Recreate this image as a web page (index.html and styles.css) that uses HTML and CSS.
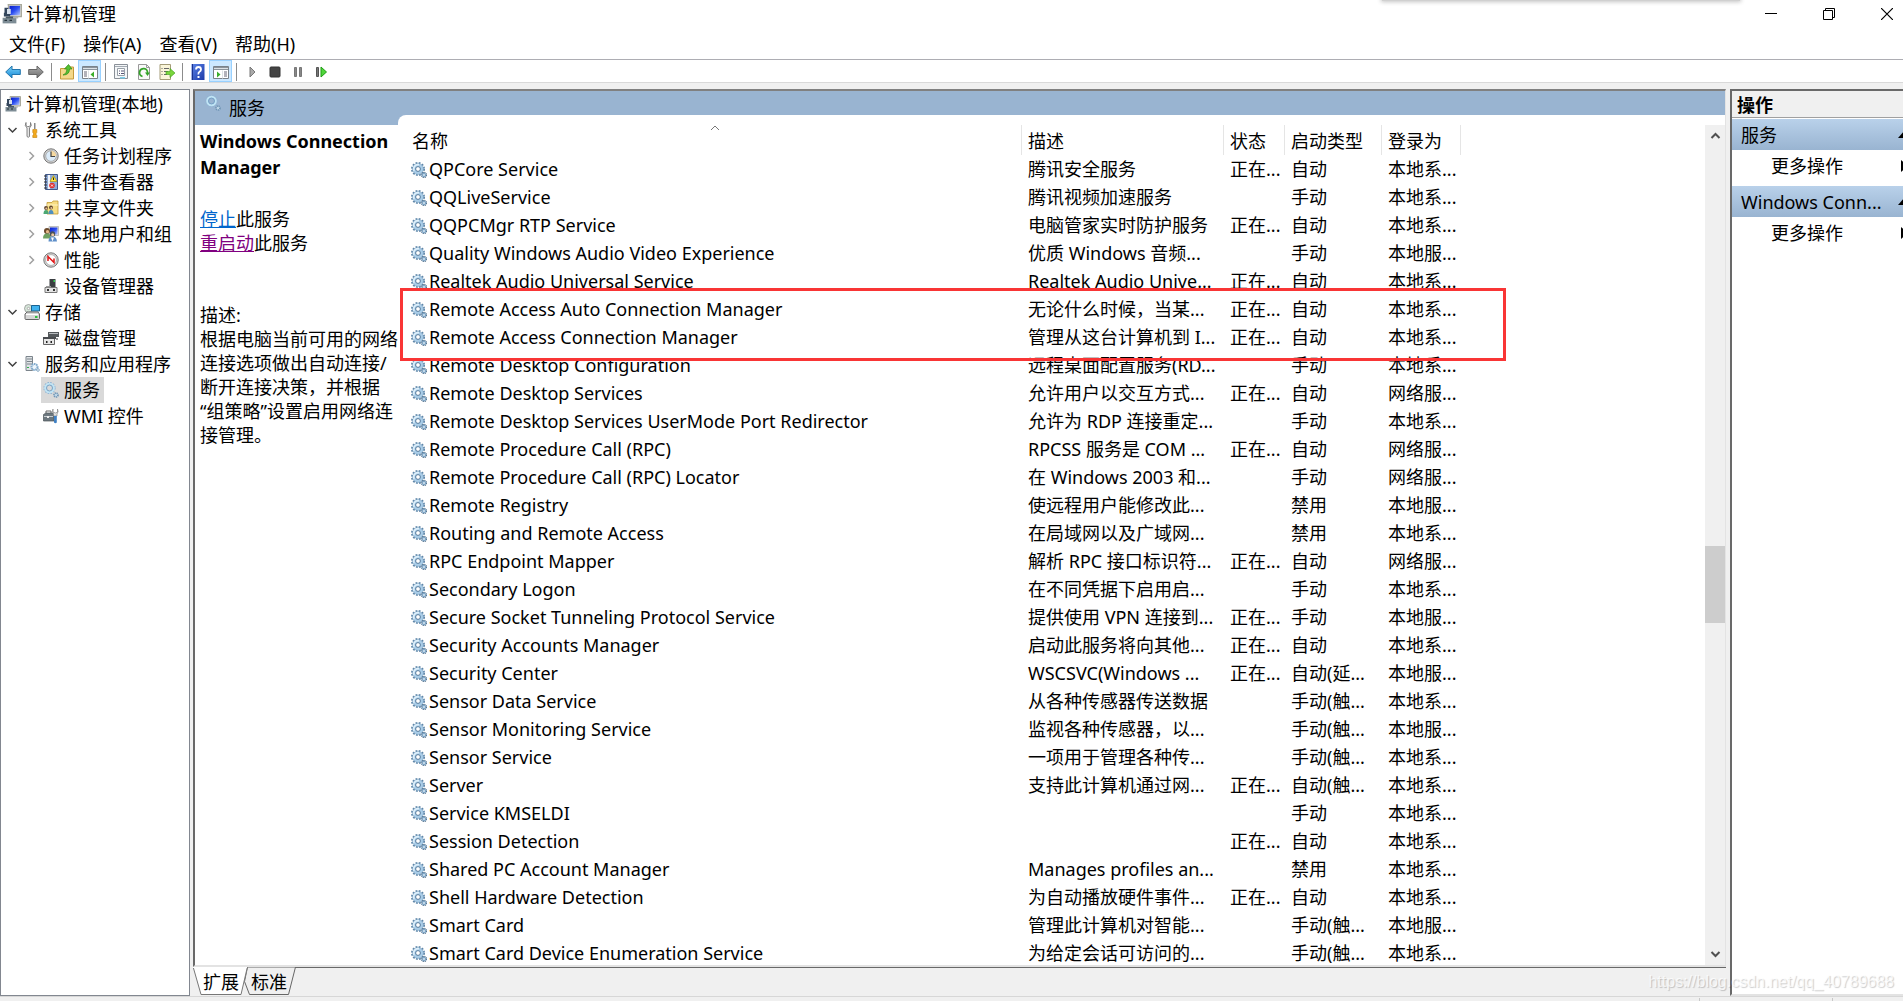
FILE: index.html
```html
<!DOCTYPE html>
<html lang="zh-CN">
<head>
<meta charset="utf-8">
<title>计算机管理</title>
<link rel="stylesheet" href="styles.css">
</head>
<body>
<svg class="sprite" aria-hidden="true">
  <defs>
    <linearGradient id="screen" x1="0" y1="0" x2="1" y2="1"><stop offset="0" stop-color="#0a1ec8"/><stop offset=".5" stop-color="#2b4df0"/><stop offset="1" stop-color="#b9ccff"/></linearGradient>
    <linearGradient id="blueArrow" x1="0" y1="0" x2="0" y2="1"><stop offset="0" stop-color="#7fd4f8"/><stop offset="1" stop-color="#1287d8"/></linearGradient>
    <linearGradient id="grayArrow" x1="0" y1="0" x2="0" y2="1"><stop offset="0" stop-color="#b0b0b0"/><stop offset="1" stop-color="#6c6c6c"/></linearGradient>
    <linearGradient id="help" x1="0" y1="0" x2="1" y2="1"><stop offset="0" stop-color="#5a82e8"/><stop offset="1" stop-color="#1c3aa8"/></linearGradient>
  </defs>
  <symbol id="computer" viewBox="0 0 16 16">
    <path d="M5 .5h10.500v9.500H6z" fill="#d8d8cc" stroke="#a9a99c"/><path d="M6 1.500h8.500v7.500H6z" fill="url(#screen)"/>
    <path d="M2 3h3v4h1.500v3H1.500V7H2z" fill="#34465c"/><path d="M4 4h3v4H4z" fill="#d9e2ee"/>
    <path d="M.5 11h11v4.500H.5z" fill="#7d8c95"/><path d="M2 12.500h2v1H2zM6 12.500h2v1H6z" fill="#26333b"/><path d="M3 10h6v1.500H3z" fill="#4b5a64"/><path d="M9 10.500h4v1H9z" fill="#aaa"/>
  </symbol>
  <symbol id="gear" viewBox="0 0 16 16">
    <circle cx="7" cy="7" r="6" fill="none" stroke="#5f86a8" stroke-width="2" stroke-dasharray="1.800 1.340"/>
    <circle cx="7" cy="7" r="5.400" fill="#a9cde8" stroke="#7ea3c2" stroke-width=".6"/>
    <path d="M3 9a4.500 4.500 0 0 1 5-6.300" fill="none" stroke="#dff0fb" stroke-width="1.600"/>
    <circle cx="7" cy="7" r="2.400" fill="#fff" stroke="#54799b" stroke-width="1"/>
    <circle cx="13" cy="13" r="2.500" fill="none" stroke="#56738e" stroke-width="1.300" stroke-dasharray="1.200 .76"/>
    <circle cx="13" cy="13" r="1.600" fill="#dcebf6" stroke="#7fa6c6" stroke-width="1.300"/>
  </symbol>
  <symbol id="gear-pale" viewBox="0 0 16 16">
    <circle cx="6.500" cy="6" r="5.500" fill="none" stroke="#8eb4d4" stroke-width="1.200" stroke-dasharray="1.700 1.180"/>
    <circle cx="6.500" cy="6" r="4.200" fill="none" stroke="#c0e4f5" stroke-width="2.200"/>
    <circle cx="6.500" cy="6" r="3" fill="none" stroke="#6f9cc2" stroke-width=".9"/>
    <circle cx="13" cy="13" r="2" fill="#c5dcec" stroke="#6f94b4" stroke-width="1.700" stroke-dasharray="1.200 .6"/>
  </symbol>
  <symbol id="tools" viewBox="0 0 16 16">
    <path d="M2 .5 1.300 3.500 3 6v8.500q1.200 1.500 2.500 0V6L7.300 3.500 6.500.5v3L5 4.500H3.500L2 3.500z" fill="#e6e6e6" stroke="#787878" stroke-width=".9"/>
    <path d="M10 1h1.500v6H10z" fill="#888"/><path d="M8.800 7.500h4v3l-.7 1v1l.7 1v2h-4v-2l.7-1v-1l-.7-1z" fill="#f2a91e" stroke="#bf7d0a" stroke-width=".6"/>
  </symbol>
  <symbol id="clock" viewBox="0 0 16 16">
    <circle cx="8" cy="8" r="7.200" fill="#d3d3d3" stroke="#777"/><circle cx="8" cy="8" r="5.300" fill="#dcecfa" stroke="#999" stroke-width=".7"/>
    <path d="M8 8V2.700A5.300 5.300 0 0 1 13.300 8z" fill="#f6d9a0"/><path d="M8 3.500V8.500H12" fill="none" stroke="#444" stroke-width="1.200"/>
  </symbol>
  <symbol id="events" viewBox="0 0 16 16">
    <path d="M2.500.5h12v15h-12z" fill="#8eabd8" stroke="#41588a"/><path d="M5 1h2v14H5z" fill="#f0f4fb"/><path d="M1 2h3M1 5h3M1 8h3M1 11h3M1 14h3" stroke="#333"/>
    <path d="M10.500 1.500 14 7.500H7z" fill="#ffe53b" stroke="#a98c00" stroke-width=".6"/><path d="M10.500 3.500v2.500" stroke="#222"/>
    <circle cx="9" cy="11.500" r="2.800" fill="#e03030"/><path d="m8 10.500 2 2m0-2-2 2" stroke="#fff" stroke-width=".9"/>
  </symbol>
  <symbol id="share" viewBox="0 0 16 16">
    <path d="M4 2.500h5l1-1.500h5v13H4z" fill="#f7dd84" stroke="#c29a36" stroke-width=".8"/><path d="M4 5h11" stroke="#fff3c4"/>
    <circle cx="3" cy="8" r="1.900" fill="#5b442f"/><circle cx="8" cy="7.500" r="1.900" fill="#5b442f"/><path d="M.5 14q0-4 2.500-4t2.500 4z" fill="#4da873"/><path d="M5.500 14q0-4 2.500-4t2.500 4z" fill="#4f8fc0"/>
    <circle cx="3.300" cy="8.500" r="1" fill="#e8be96"/><circle cx="8.300" cy="8" r="1" fill="#e8be96"/>
  </symbol>
  <symbol id="users" viewBox="0 0 16 16">
    <path d="M6 .5h9.500v9H6z" fill="#ddd" stroke="#aaa" stroke-width=".7"/><path d="M7 1.500h7.500v7H7z" fill="url(#screen)"/>
    <circle cx="4" cy="5" r="3" fill="#6b4a2c"/><circle cx="4.500" cy="5.700" r="1.600" fill="#e6b98a"/><path d="M0 12.500q0-5 4-5t4 5z" fill="#6da060"/>
    <circle cx="9.500" cy="8" r="2.700" fill="#49515a"/><circle cx="9.700" cy="8.700" r="1.500" fill="#efc9a2"/><path d="M5.500 15.500q0-5 4-5t4.500 5z" fill="#5f8fc9"/><path d="M8 11.500h3l-1.500 4z" fill="#fff"/>
  </symbol>
  <symbol id="gauge" viewBox="0 0 16 16">
    <circle cx="8" cy="8" r="7.200" fill="#d6d6d6" stroke="#777"/><circle cx="8" cy="8" r="5.400" fill="#fff" stroke="#999" stroke-width=".7"/>
    <path d="M5 9V4.500l6 6V6.500" fill="none" stroke="#e01414" stroke-width="1.500"/>
  </symbol>
  <symbol id="device" viewBox="0 0 16 16">
    <path d="M6.500 1h6v8h-6z" fill="#3b3f42"/><path d="M10.500 2h1.500v2h-1.500z" fill="#39d353"/><path d="M2 9.500h12v5H2z" fill="#e3e3e3" stroke="#777"/><path d="M4 11h2v2H4zM10 11h2v2h-2z" fill="#333"/><path d="M3 8h5v1.500H3z" fill="#999"/>
  </symbol>
  <symbol id="storage" viewBox="0 0 16 16">
    <circle cx="4.500" cy="4.500" r="4" fill="#d5e5d8" stroke="#888" stroke-width=".7"/><circle cx="4.500" cy="4.500" r="1.200" fill="#fff" stroke="#888" stroke-width=".6"/>
    <path d="M7.500 1.500h8v5.500h-8z" fill="#3fb2ee" stroke="#196391"/><path d="M1 10 3 8h11l1.500 2v4.500q0 1-1 1H2q-1 0-1-1z" fill="#d6d6d6" stroke="#666"/><path d="M2 10.500h12" stroke="#fff"/><path d="M11 12h2.500v2H11z" fill="#2fbe3c"/>
  </symbol>
  <symbol id="disk" viewBox="0 0 16 16">
    <path d="M5 2h11v5H5z" fill="#55595c"/><path d="M6 3h9v1H6z" fill="#b8bcbf"/><path d="M.5 8h11v6.500H.5z" fill="#e6e6e6" stroke="#666"/><path d="M0 7h13v2H0z" fill="#484b4e"/><path d="M3 11h1.500v2H3zM7.500 11H9v2H7.500z" fill="#222"/><path d="M13 8h2v2h-2z" fill="#999"/>
  </symbol>
  <symbol id="server" viewBox="0 0 16 16">
    <path d="M2 .5h6.500v14H2z" fill="#dfe3e6" stroke="#7c858c"/><path d="M3 3h5M3 5.500h5M3 8h5" stroke="#7c858c"/><path d="M3 11h2v1H3z" fill="#2fae49"/>
    <circle cx="10.500" cy="11" r="3" fill="#eef6fc" stroke="#7fa9cb" stroke-width="2" stroke-dasharray="1.600 .6"/><circle cx="14" cy="14" r="1.300" fill="#fff" stroke="#88aac6"/>
  </symbol>
  <symbol id="wmi" viewBox="0 0 16 16">
    <path d="M3 5V3h5v2" fill="none" stroke="#666"/><path d="M.5 6.500 3 5h8v8H.5z" fill="#6c777e" stroke="#4b5358" stroke-width=".7"/><path d="M1 8.500h9" stroke="#c8ced2"/><path d="M4 8h2v2H4z" fill="#eee"/>
    <path d="M10 1q-1.500 2.500.5 5v2h3.500V6q2-2.500.5-5v3l-2 1-2.500-1z" fill="#e2e2e2" stroke="#777" stroke-width=".6"/><path d="M11 8h2.800v6.500q-1.400 1.500-2.800 0z" fill="#3f80c4"/>
  </symbol>
  <symbol id="chevron-down" viewBox="0 0 10 10"><path d="m1 3 4 4 4-4" fill="none" stroke="#404040" stroke-width="1.500"/></symbol>
  <symbol id="chevron-right" viewBox="0 0 10 10"><path d="m3 1 4 4-4 4" fill="none" stroke="#a0a0a0" stroke-width="1.500"/></symbol>
</svg>

<header class="titlebar">
  <svg class="app-icon"><use href="#computer"/></svg>
  <h1 class="title">计算机管理</h1>
  <div class="window-buttons">
    <button class="window-button" aria-label="最小化"><svg width="12" height="12"><path d="M0 5.500h12" stroke="#000"/></svg></button>
    <button class="window-button" aria-label="还原"><svg width="12" height="12" fill="none" stroke="#000"><path d="M.5 2.500h9v9h-9zM2.500 2.500v-2h9v9h-2"/></svg></button>
    <button class="window-button window-close" aria-label="关闭"><svg width="12" height="12"><path d="m0 0 12 12M12 0 0 12" stroke="#000" stroke-width="1.200"/></svg></button>
  </div>
  <div class="top-shadow"></div>
</header>

<nav class="menubar">
  <button>文件(F)</button><button>操作(A)</button><button>查看(V)</button><button>帮助(H)</button>
</nav>

<div class="toolbar">
  <button aria-label="后退"><svg viewBox="0 0 16 16"><path d="M.7 8 7 2v3.500h8.300v5H7V14z" fill="url(#blueArrow)" stroke="#2376ad"/></svg></button>
  <button aria-label="前进"><svg viewBox="0 0 16 16"><path d="M15.300 8 9 2v3.500H.7v5H9V14z" fill="url(#grayArrow)" stroke="#666"/></svg></button>
  <span class="separator"></span>
  <button aria-label="上一级"><svg viewBox="0 0 16 16"><path d="M1.500 4.500h5l1-1.500h7v12h-13z" fill="#f4d88a" stroke="#c69b3c"/><path d="M4 11q4-1 4-6H5.500L9.500.5 13 5h-2.500q0 6-6.500 6z" fill="#55c234" stroke="#2e8a16" stroke-width=".7"/></svg></button>
  <button class="pressed" aria-label="显示/隐藏控制台树"><svg viewBox="0 0 16 16"><path d="M.5 2.500h15v12H.5z" fill="#fff" stroke="#7a828a"/><path d="M1 3h14v3H1z" fill="#8b949c"/><path d="M1 4.500h14M6.500 6.500v8" stroke="#dde2e6"/><path d="M2 8h3M2 10h3M2 12h3" stroke="#667"/><path d="M12 7.500v6L8.500 10.500z" fill="#3aae2a"/></svg></button>
  <span class="separator"></span>
  <button aria-label="属性"><svg viewBox="0 0 16 16"><path d="M1.500.5h13v14h-13z" fill="#f4f6f8" stroke="#8a9098"/><path d="M2 2.500h12" stroke="#a3aab2"/><path d="M4.500 4.500h7v7h-7z" fill="#fff" stroke="#98a0a8"/><path d="M6 7h1M8 7h3M6 9.500h1M8 9.500h3" stroke="#557"/><path d="M7 13h5v1.500H7z" fill="#7bd0ee"/></svg></button>
  <button aria-label="刷新"><svg viewBox="0 0 16 16"><path d="M2.500.5h8l3 3v12h-11z" fill="#fafafa" stroke="#999"/><path d="M10.500.5v3h3" fill="none" stroke="#999"/><path d="M6.500 12.500A4 4 0 1 1 11.500 9" fill="none" stroke="#34a329" stroke-width="1.800"/><path d="M9 8.500h5l-2.500 3.500z" fill="#34a329"/></svg></button>
  <button aria-label="导出列表"><svg viewBox="0 0 16 16"><path d="M1 .5h10.500v15H1z" fill="#fbf6da" stroke="#a49c78"/><path d="M2.500 4.500h1M5 4.500h5M2.500 7.500h1M5 7.500h4M2.500 10.500h1M5 10.500h3" stroke="#666"/><path d="M7 7.500h4V4.500l5 4.500-5 4.500v-3H7z" fill="#7ad53c" stroke="#3d9a1d" stroke-width=".6"/></svg></button>
  <span class="separator"></span>
  <button aria-label="帮助"><svg viewBox="0 0 16 16"><path d="M1.500 0h13v16h-13z" fill="url(#help)"/><path d="M2.500 0v16" stroke="#1b318c"/><path d="M6 5.500q0-2.500 2.500-2.500T11 5.500q0 1.500-1.500 2.300T8.500 10.500" fill="none" stroke="#fff" stroke-width="1.800"/><path d="M7.500 12h2v2h-2z" fill="#fff"/></svg></button>
  <button class="pressed" aria-label="显示/隐藏操作窗格"><svg viewBox="0 0 16 16"><path d="M.5 2.500h15v12H.5z" fill="#fff" stroke="#7a828a"/><path d="M1 3h14v3H1z" fill="#8b949c"/><path d="M1 4.500h14M9.500 6.500v8" stroke="#dde2e6"/><path d="M11 8h3M11 10h3M11 12h3" stroke="#667"/><path d="M4 7.500v6l3.500-3z" fill="#3aae2a"/></svg></button>
  <span class="separator"></span>
  <button aria-label="启动服务"><svg viewBox="0 0 16 16"><path d="M6 3v10l5-5z" fill="#aaa" stroke="#777"/></svg></button>
  <button aria-label="停止服务"><svg viewBox="0 0 16 16"><rect x="3" y="3" width="10" height="10" rx="1" fill="#444" stroke="#333"/></svg></button>
  <button aria-label="暂停服务"><svg viewBox="0 0 16 16"><path d="M4.500 3.500h2v9h-2zM9.500 3.500h2v9h-2z" fill="#888" stroke="#777"/></svg></button>
  <button aria-label="重新启动服务"><svg viewBox="0 0 16 16"><path d="M3.500 3.500h2v9h-2z" fill="#777" stroke="#555"/><path d="M8 3v10l5.500-5z" fill="#4fd53a" stroke="#1e9d12"/></svg></button>
</div>

<main class="workspace">
  <nav class="tree">
    <div class="node root"><span class="label"><svg><use href="#computer"/></svg>计算机管理(本地)</span></div>
    <ul>
      <li><div class="node"><svg class="chevron"><use href="#chevron-down"/></svg><span class="label"><svg><use href="#tools"/></svg>系统工具</span></div>
        <ul>
          <li class="node"><svg class="chevron"><use href="#chevron-right"/></svg><span class="label"><svg><use href="#clock"/></svg>任务计划程序</span></li>
          <li class="node"><svg class="chevron"><use href="#chevron-right"/></svg><span class="label"><svg><use href="#events"/></svg>事件查看器</span></li>
          <li class="node"><svg class="chevron"><use href="#chevron-right"/></svg><span class="label"><svg><use href="#share"/></svg>共享文件夹</span></li>
          <li class="node"><svg class="chevron"><use href="#chevron-right"/></svg><span class="label"><svg><use href="#users"/></svg>本地用户和组</span></li>
          <li class="node"><svg class="chevron"><use href="#chevron-right"/></svg><span class="label"><svg><use href="#gauge"/></svg>性能</span></li>
          <li class="node"><svg class="chevron"></svg><span class="label"><svg><use href="#device"/></svg>设备管理器</span></li>
        </ul>
      </li>
      <li><div class="node"><svg class="chevron"><use href="#chevron-down"/></svg><span class="label"><svg><use href="#storage"/></svg>存储</span></div>
        <ul>
          <li class="node"><svg class="chevron"></svg><span class="label"><svg><use href="#disk"/></svg>磁盘管理</span></li>
        </ul>
      </li>
      <li><div class="node"><svg class="chevron"><use href="#chevron-down"/></svg><span class="label"><svg><use href="#server"/></svg>服务和应用程序</span></div>
        <ul>
          <li class="node"><svg class="chevron"></svg><span class="label selected"><svg><use href="#gear-pale"/></svg>服务</span></li>
          <li class="node"><svg class="chevron"></svg><span class="label"><svg><use href="#wmi"/></svg>WMI 控件</span></li>
        </ul>
      </li>
    </ul>
  </nav>

  <section class="center">
    <div class="pane">
      <div class="side">
        <h2 class="banner"><svg><use href="#gear-pale"/></svg>服务</h2>
        <div class="info">
          <h3>Windows Connection Manager</h3>
          <p class="links"><a href="#stop">停止</a>此服务<br><a class="visited" href="#restart">重启动</a>此服务</p>
          <p>描述:<br>根据电脑当前可用的网络连接选项做出自动连接/断开连接决策，并根据“组策略”设置启用网络连接管理。</p>
        </div>
      </div>
      <div class="list-frame">
        <div class="list">
          <table>
            <colgroup><col class="c-name"><col class="c-desc"><col class="c-state"><col class="c-type"><col class="c-logon"></colgroup>
            <thead><tr><th>名称<svg class="sort" viewBox="0 0 10 6"><path d="m1 5 4-4 4 4" fill="none" stroke="#777"/></svg></th><th>描述</th><th>状态</th><th>启动类型</th><th>登录为</th></tr></thead>
            <tbody>
              <tr><td><svg><use href="#gear"/></svg>QPCore Service</td><td>腾讯安全服务</td><td>正在...</td><td>自动</td><td>本地系...</td></tr>
              <tr><td><svg><use href="#gear"/></svg>QQLiveService</td><td>腾讯视频加速服务</td><td></td><td>手动</td><td>本地系...</td></tr>
              <tr><td><svg><use href="#gear"/></svg>QQPCMgr RTP Service</td><td>电脑管家实时防护服务</td><td>正在...</td><td>自动</td><td>本地系...</td></tr>
              <tr><td><svg><use href="#gear"/></svg>Quality Windows Audio Video Experience</td><td>优质 Windows 音频...</td><td></td><td>手动</td><td>本地服...</td></tr>
              <tr><td><svg><use href="#gear"/></svg>Realtek Audio Universal Service</td><td>Realtek Audio Unive...</td><td>正在...</td><td>自动</td><td>本地系...</td></tr>
              <tr><td><svg><use href="#gear"/></svg>Remote Access Auto Connection Manager</td><td>无论什么时候，当某...</td><td>正在...</td><td>自动</td><td>本地系...</td></tr>
              <tr><td><svg><use href="#gear"/></svg>Remote Access Connection Manager</td><td>管理从这台计算机到 I...</td><td>正在...</td><td>自动</td><td>本地系...</td></tr>
              <tr><td><svg><use href="#gear"/></svg>Remote Desktop Configuration</td><td>远程桌面配置服务(RD...</td><td></td><td>手动</td><td>本地系...</td></tr>
              <tr><td><svg><use href="#gear"/></svg>Remote Desktop Services</td><td>允许用户以交互方式...</td><td>正在...</td><td>自动</td><td>网络服...</td></tr>
              <tr><td><svg><use href="#gear"/></svg>Remote Desktop Services UserMode Port Redirector</td><td>允许为 RDP 连接重定...</td><td></td><td>手动</td><td>本地系...</td></tr>
              <tr><td><svg><use href="#gear"/></svg>Remote Procedure Call (RPC)</td><td>RPCSS 服务是 COM ...</td><td>正在...</td><td>自动</td><td>网络服...</td></tr>
              <tr><td><svg><use href="#gear"/></svg>Remote Procedure Call (RPC) Locator</td><td>在 Windows 2003 和...</td><td></td><td>手动</td><td>网络服...</td></tr>
              <tr><td><svg><use href="#gear"/></svg>Remote Registry</td><td>使远程用户能修改此...</td><td></td><td>禁用</td><td>本地服...</td></tr>
              <tr><td><svg><use href="#gear"/></svg>Routing and Remote Access</td><td>在局域网以及广域网...</td><td></td><td>禁用</td><td>本地系...</td></tr>
              <tr><td><svg><use href="#gear"/></svg>RPC Endpoint Mapper</td><td>解析 RPC 接口标识符...</td><td>正在...</td><td>自动</td><td>网络服...</td></tr>
              <tr><td><svg><use href="#gear"/></svg>Secondary Logon</td><td>在不同凭据下启用启...</td><td></td><td>手动</td><td>本地系...</td></tr>
              <tr><td><svg><use href="#gear"/></svg>Secure Socket Tunneling Protocol Service</td><td>提供使用 VPN 连接到...</td><td>正在...</td><td>手动</td><td>本地服...</td></tr>
              <tr><td><svg><use href="#gear"/></svg>Security Accounts Manager</td><td>启动此服务将向其他...</td><td>正在...</td><td>自动</td><td>本地系...</td></tr>
              <tr><td><svg><use href="#gear"/></svg>Security Center</td><td>WSCSVC(Windows ...</td><td>正在...</td><td>自动(延...</td><td>本地服...</td></tr>
              <tr><td><svg><use href="#gear"/></svg>Sensor Data Service</td><td>从各种传感器传送数据</td><td></td><td>手动(触...</td><td>本地系...</td></tr>
              <tr><td><svg><use href="#gear"/></svg>Sensor Monitoring Service</td><td>监视各种传感器，以...</td><td></td><td>手动(触...</td><td>本地服...</td></tr>
              <tr><td><svg><use href="#gear"/></svg>Sensor Service</td><td>一项用于管理各种传...</td><td></td><td>手动(触...</td><td>本地系...</td></tr>
              <tr><td><svg><use href="#gear"/></svg>Server</td><td>支持此计算机通过网...</td><td>正在...</td><td>自动(触...</td><td>本地系...</td></tr>
              <tr><td><svg><use href="#gear"/></svg>Service KMSELDI</td><td></td><td></td><td>手动</td><td>本地系...</td></tr>
              <tr><td><svg><use href="#gear"/></svg>Session Detection</td><td></td><td>正在...</td><td>自动</td><td>本地系...</td></tr>
              <tr><td><svg><use href="#gear"/></svg>Shared PC Account Manager</td><td>Manages profiles an...</td><td></td><td>禁用</td><td>本地系...</td></tr>
              <tr><td><svg><use href="#gear"/></svg>Shell Hardware Detection</td><td>为自动播放硬件事件...</td><td>正在...</td><td>自动</td><td>本地系...</td></tr>
              <tr><td><svg><use href="#gear"/></svg>Smart Card</td><td>管理此计算机对智能...</td><td></td><td>手动(触...</td><td>本地服...</td></tr>
              <tr><td><svg><use href="#gear"/></svg>Smart Card Device Enumeration Service</td><td>为给定会话可访问的...</td><td></td><td>手动(触...</td><td>本地系...</td></tr>
            </tbody>
          </table>
          <div class="scrollbar">
            <svg viewBox="0 0 10 10"><path d="m1 7 4-4 4 4" fill="none" stroke="#505050" stroke-width="2"/></svg>
            <div class="track"><div class="thumb"></div></div>
            <svg viewBox="0 0 10 10"><path d="m1 3 4 4 4-4" fill="none" stroke="#505050" stroke-width="2"/></svg>
          </div>
          <div class="highlight"></div>
        </div>
      </div>
    </div>
    <div class="tabs">
      <svg class="tab-shapes" width="104" height="28"><path d="M54.500 0h48l-7 27.500h-39l-5-13z" fill="#f0f0f0" stroke="#666"/><path d="M0-.5 8 27.500h40L54.500-.5z" fill="#fff" stroke="#777"/><path d="M0 0h54" stroke="#fff" stroke-width="2"/></svg>
      <button>扩展</button><button>标准</button>
    </div>
  </section>

  <aside class="actions">
    <h2>操作</h2>
    <h3>服务<svg width="12" height="8"><path d="M0 7h12L6 0z"/></svg></h3>
    <button>更多操作<svg width="8" height="12"><path d="M0 0v12l7-6z"/></svg></button>
    <h3>Windows Conn...<svg width="12" height="8"><path d="M0 7h12L6 0z"/></svg></h3>
    <button>更多操作<svg width="8" height="12"><path d="M0 0v12l7-6z"/></svg></button>
  </aside>
</main>
<footer class="statusbar"><span></span><span></span></footer>
<div class="watermark">https://blog.csdn.net/qq_40789688</div>
</body>
</html>
```
FILE: styles.css
```css
* { box-sizing: border-box; }
html, body { height: 100%; }
body {
  margin: 0;
  display: flex;
  flex-direction: column;
  overflow: hidden;
  background: #f0f0f0;
  color: #000;
  font: 18px/26px "Noto Sans", "Noto Sans CJK SC", sans-serif;
}
h1, h2, h3, p, ul { margin: 0; padding: 0; font-size: 18px; font-weight: 400; }
ul { list-style: none; }
svg { flex: none; }
button { margin: 0; padding: 0; border: 0; background: none; color: inherit; font: inherit; }
.sprite { position: absolute; width: 0; height: 0; }

.titlebar { position: relative; display: flex; align-items: center; height: 28px; padding-left: 2px; background: #fff; }
.app-icon { width: 20px; height: 20px; margin-right: 4px; }
.window-buttons { display: flex; margin-left: auto; }
.window-button { display: flex; align-items: center; justify-content: center; width: 58px; height: 28px; }
.window-close { width: 45px; justify-content: flex-start; padding-left: 23px; }
.top-shadow { position: absolute; top: -4px; right: 163px; width: 358px; height: 5px; background: #d0d0d0; box-shadow: 0 0 4px 1px #c4c4c4; }

.menubar { display: flex; gap: 18px; height: 32px; padding: 4px 9px; background: #fff; border-bottom: 1px solid #adadb3; line-height: 24px; }

.toolbar { display: flex; align-items: stretch; height: 23px; padding-left: 1px; background: #fff; border-bottom: 1px solid #d9d9d9; }
.toolbar button { display: flex; align-items: center; justify-content: center; width: 23px; padding-top: 1px; }
.toolbar svg { width: 16px; height: 16px; }
.toolbar .pressed { background: #cce8ff; border: 1px solid #99d1ff; }
.separator { width: 8px; padding: 3px 0 1px; display: flex; justify-content: center; }
.separator::before { content: ""; width: 1px; background: #8c8c8c; }

.workspace { flex: 1; display: flex; min-height: 0; padding-top: 6px; }

.tree { width: 190px; margin-right: 3px; padding: 1px; background: #fff; border: 1px solid #828790; white-space: nowrap; overflow: hidden; }
.tree ul ul { padding-left: 19px; }
.node { display: flex; align-items: center; height: 26px; }
.chevron { width: 20px; height: 10px; padding-left: 1px; }
.label { display: flex; align-items: center; gap: 5px; height: 26px; padding: 0 4px 0 2px; }
.label svg { width: 16px; height: 16px; }
.root { padding-left: 1px; }
.selected { background: #d9d9d9; }

.center { flex: 1; min-width: 0; display: flex; flex-direction: column; }
.pane { flex: 1; min-height: 0; display: flex; background: #fff; border: 2px solid #696969; border-top-color: #808080; border-right: 1px solid #e3e3e3; border-bottom-color: #e3e3e3; }
.side { width: 203px; display: flex; flex-direction: column; }
.banner { display: flex; gap: 8px; height: 34px; padding: 4px 0 0 10px; background: #99b4d1; }
.banner svg { width: 16px; height: 16px; }
.info { padding: 3px 0 0 5px; line-height: 24px; }
.info h3 { margin-bottom: 27px; font-weight: 700; line-height: 26px; }
.links { margin-bottom: 48px; }
a { color: #0066cc; }
.visited { color: #800080; }

.list-frame { flex: 1; min-width: 0; display: flex; padding-top: 24px; background: #99b4d1; }
.list { position: relative; flex: 1; min-width: 0; display: flex; align-items: flex-start; justify-content: space-between; padding-top: 10px; background: #fff; border-top-left-radius: 8px; overflow: hidden; }
table { border-collapse: separate; border-spacing: 0; table-layout: fixed; width: 1063px; }
.c-name { width: 624px; }
.c-desc { width: 202px; }
.c-state { width: 61px; }
.c-type { width: 97px; }
.c-logon { width: 79px; }
th { position: relative; height: 30px; padding: 2px 0 0 6px; border-right: 1px solid #e5e5e5; font-weight: 400; text-align: left; line-height: 26px; }
td { height: 28px; padding: 0 0 0 6px; line-height: 28px; white-space: nowrap; }
td:first-child { padding-left: 13px; }
th:first-child { padding-left: 14px; }
td svg { width: 16px; height: 16px; margin-right: 2px; vertical-align: -2px; }
.sort { position: absolute; top: 0; left: 50%; width: 10px; height: 6px; }
.scrollbar { align-self: stretch; width: 20px; display: flex; flex-direction: column; align-items: center; padding: 6px 0; background: #f0f0f0; }
.scrollbar svg { width: 11px; height: 10px; }
.track { flex: 1; width: 100%; }
.thumb { height: 77px; margin-top: 405px; background: #cdcdcd; }
.highlight { position: absolute; left: 2px; top: 173px; width: 1106px; height: 73px; border: 3px solid #f93535; }

.tabs { position: relative; display: flex; gap: 12px; height: 28px; margin-bottom: 1px; padding-left: 10px; border-top: 1px solid #696969; }
.tab-shapes { position: absolute; left: 0; top: -1px; }
.tabs button { position: relative; line-height: 26px; }

.actions { width: 173px; margin-left: 4px; background: #fff; border: 2px solid #696969; border-right: 0; border-bottom-color: #e3e3e3; white-space: nowrap; overflow: hidden; }
.actions h2 { height: 27px; padding-left: 5px; background: #f0f0f0; border-bottom: 1px solid #a0a0a0; font-weight: 700; line-height: 28px; }
.actions h3 { display: flex; align-items: center; height: 31px; margin-top: 1px; padding-left: 9px; background: linear-gradient(#b9d1ea, #99b4d1); }
.actions svg { margin-left: auto; margin-right: -7px; }
.actions button { display: flex; align-items: center; width: 100%; height: 35px; padding: 0 0 4px 39px; }
.actions button svg { margin-right: -6px; }

.statusbar { display: flex; justify-content: flex-end; height: 5px; padding: 1px 70px 0 0; border-top: 1px solid #d7d7d7; }
.statusbar span { width: 133px; border-left: 1px solid #c8c8c8; }
.statusbar span:last-child { width: 1px; }
.watermark { position: absolute; right: 9px; bottom: 9px; color: rgba(255, 255, 255, .75); text-shadow: 1px 1px 1px rgba(0, 0, 0, .2); font: 16px/20px "Liberation Sans", sans-serif; }
```
